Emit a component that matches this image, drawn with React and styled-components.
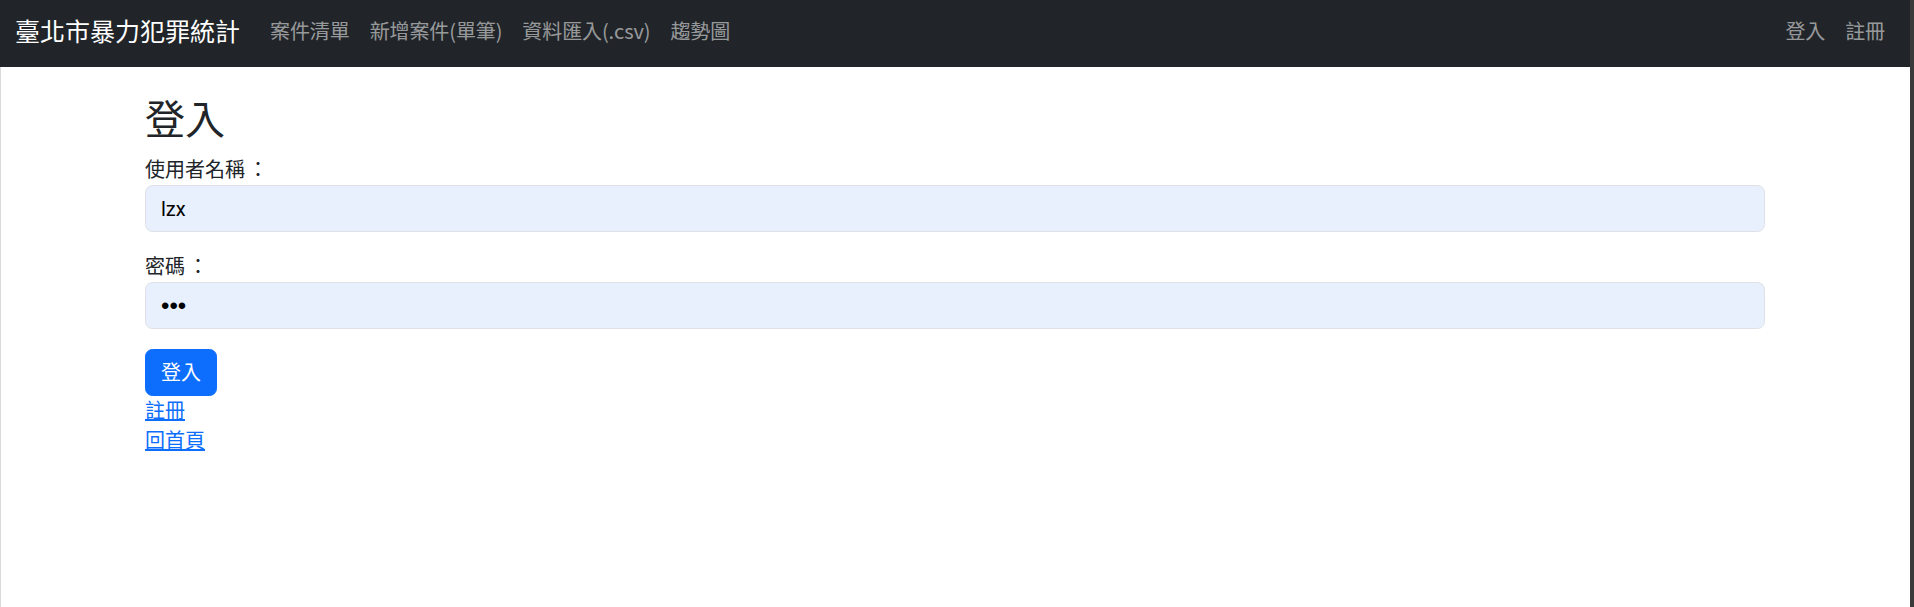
import React from "react";
import styled, { createGlobalStyle } from "styled-components";

const GlobalStyle = createGlobalStyle`
  html, body {
    margin: 0;
    padding: 0;
    background: #fff;
  }
  body {
    font-family: Roboto, "Noto Sans CJK TC", sans-serif;
    font-size: 20px;
    line-height: 1.5;
    color: #212529;
  }
  * {
    box-sizing: border-box;
  }
`;

const Frame = styled.div`
  display: flex;
  width: 1914px;
  height: 607px;
  overflow: hidden;
`;

const Window = styled.div`
  flex: 1;
  display: flex;
  flex-direction: column;
  min-width: 0;
`;

const Edge = styled.div`
  width: 4px;
  background: #3a3a3a;
`;

const Navbar = styled.nav`
  height: 67px;
  flex-shrink: 0;
  display: flex;
  align-items: center;
  padding: 0 15px 5px;
  background: #212529;
  font-family: "Noto Sans CJK TC", Roboto, sans-serif;
`;

const Brand = styled.a`
  font-size: 25px;
  color: #fff;
  margin-right: 20px;
  text-decoration: none;
  white-space: nowrap;
`;

const NavList = styled.div`
  display: flex;
  align-items: center;
  margin-left: ${(p) => (p.$right ? "auto" : "0")};
`;

const NavLink = styled.a`
  padding: 0 10px;
  font-size: 20px;
  color: rgba(255, 255, 255, 0.55);
  text-decoration: none;
  white-space: nowrap;
  letter-spacing: -0.1px;
`;

const Main = styled.main`
  flex: 1;
  border-left: 1px solid #dadada;
`;

const Container = styled.div`
  width: 1620px;
  margin: 0 auto;
  padding-top: 30px;
  position: relative;
  left: -0.5px;
`;

const Title = styled.h2`
  margin: 0 0 10px;
  font-size: 40px;
  font-weight: 400;
  line-height: 1.2;
`;

const Field = styled.div`
  margin-bottom: 20px;
`;

const Label = styled.label`
  display: block;
`;

// full-width colon sits centred in its cell in the reference
const Colon = styled.span`
  display: inline-block;
  padding-left: 3px;
`;

const Input = styled.input`
  display: block;
  width: 100%;
  height: 47px;
  padding: 7.5px 15px;
  font-family: ${(p) =>
    p.type === "password" ? '"Liberation Sans", sans-serif' : "inherit"};
  font-size: ${(p) => (p.type === "password" ? "24px" : "20px")};
  line-height: 1.5;
  color: #000;
  background: #e8f0fe;
  border: 1px solid #dee2e6;
  border-radius: 7.5px;
  outline: none;
`;

const Button = styled.button`
  height: 47px;
  padding: 0 15px;
  font-family: inherit;
  font-size: 20px;
  line-height: 1.5;
  color: #fff;
  background: #0d6efd;
  border: 1px solid #0d6efd;
  border-radius: 7.5px;
`;

const Links = styled.div`
  display: flex;
  flex-direction: column;
  align-items: flex-start;
`;

const TextLink = styled.a`
  color: #0d6efd;
  text-decoration: underline;
`;

export default function App() {
  return (
    <div lang="zh-TW">
      <GlobalStyle />
      <Frame>
        <Window>
          <Navbar>
            <Brand href="#">臺北市暴力犯罪統計</Brand>
            <NavList>
              <NavLink href="#">案件清單</NavLink>
              <NavLink href="#">新增案件(單筆)</NavLink>
              <NavLink href="#">資料匯入(.csv)</NavLink>
              <NavLink href="#">趨勢圖</NavLink>
            </NavList>
            <NavList $right>
              <NavLink href="#">登入</NavLink>
              <NavLink href="#">註冊</NavLink>
            </NavList>
          </Navbar>
          <Main>
            <Container>
              <Title>登入</Title>
              <form onSubmit={(e) => e.preventDefault()}>
                <Field>
                  <Label htmlFor="username">
                    使用者名稱<Colon>：</Colon>
                  </Label>
                  <Input id="username" type="text" defaultValue="lzx" />
                </Field>
                <Field>
                  <Label htmlFor="password">
                    密碼<Colon>：</Colon>
                  </Label>
                  <Input id="password" type="password" defaultValue="abc" />
                </Field>
                <Button type="submit">登入</Button>
              </form>
              <Links>
                <TextLink href="#">註冊</TextLink>
                <TextLink href="#">回首頁</TextLink>
              </Links>
            </Container>
          </Main>
        </Window>
        <Edge />
      </Frame>
    </div>
  );
}
